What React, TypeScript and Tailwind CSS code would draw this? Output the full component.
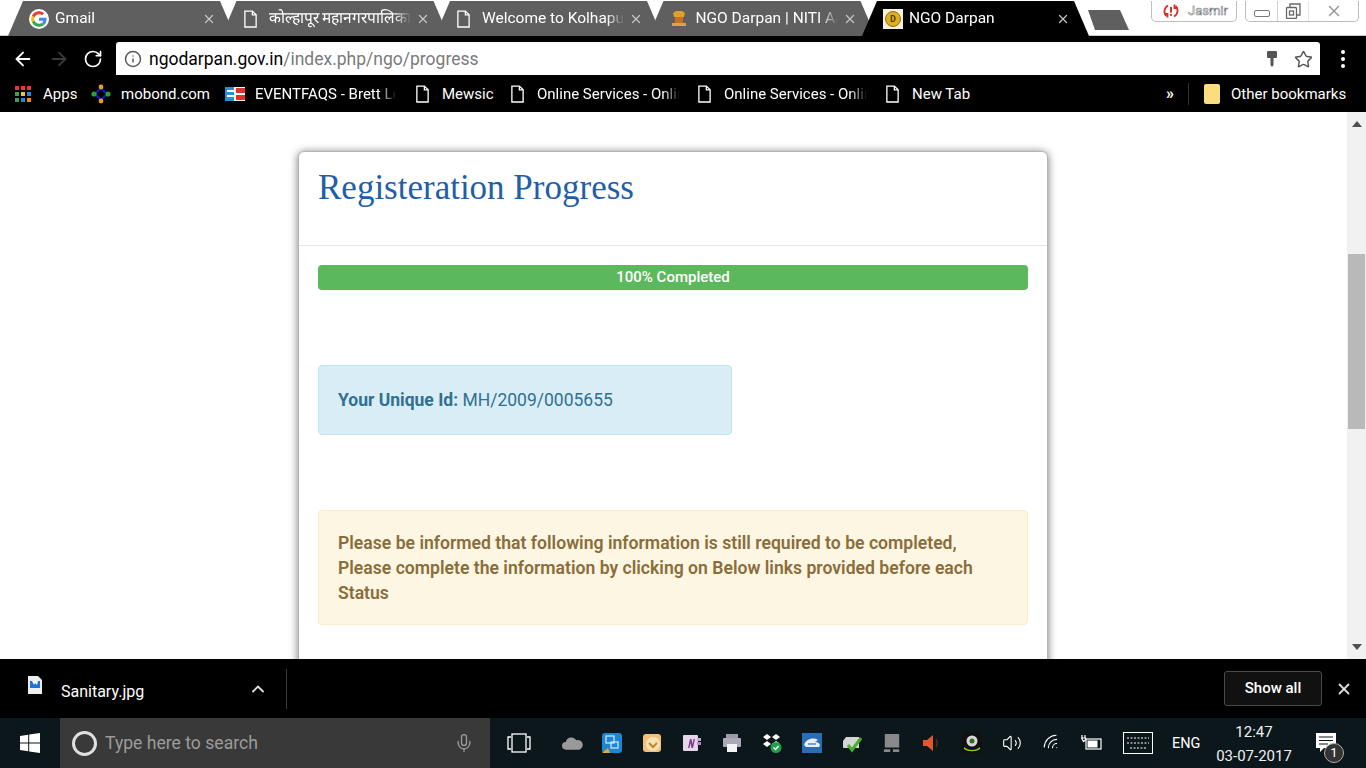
import React from 'react';
import { ArrowLeft, ArrowRight, RotateCw, Info, Star, X, ChevronUp, Mic, Volume2, Wifi } from 'lucide-react';

const FileIcon = ({ className = '' }: { className?: string }) => (
  <svg viewBox="0 0 16 20" className={className} fill="none" stroke="currentColor" strokeWidth="1.4">
    <path d="M2 1.5h8l4 4v13H2z" />
    <path d="M10 1.5v4h4" />
  </svg>
);

const GoogleIcon = () => (
  <svg viewBox="0 0 48 48" className="w-5 h-5 bg-white rounded-full p-[2px]">
    <path fill="#EA4335" d="M24 9.5c3.5 0 6.7 1.3 9.1 3.5l6.8-6.8C35.8 2.4 30.2 0 24 0 14.6 0 6.5 5.4 2.6 13.2l7.9 6.2C12.4 13.7 17.7 9.5 24 9.5z" />
    <path fill="#4285F4" d="M46.98 24.55c0-1.57-.15-3.09-.38-4.55H24v9.02h12.94c-.58 2.96-2.26 5.48-4.78 7.18l7.73 6c4.51-4.18 7.09-10.36 7.09-17.65z" />
    <path fill="#FBBC05" d="M10.53 28.59c-.48-1.45-.76-2.99-.76-4.59s.27-3.14.76-4.59l-7.98-6.19C.92 16.46 0 20.12 0 24c0 3.88.92 7.54 2.56 10.78l7.97-6.19z" />
    <path fill="#34A853" d="M24 48c6.48 0 11.93-2.13 15.89-5.81l-7.73-6c-2.15 1.45-4.92 2.3-8.16 2.3-6.26 0-11.57-4.22-13.47-9.91l-7.98 6.19C6.51 42.62 14.62 48 24 48z" />
  </svg>
);

const EmblemIcon = () => (
  <svg viewBox="0 0 18 18" className="w-[18px] h-[18px]">
    <path fill="#e0a030" d="M3 3l3-2h6l3 2-1 4H4z" />
    <rect x="5" y="7" width="8" height="6" fill="#c96f1e" />
    <rect x="2" y="13" width="14" height="3" fill="#e3a03c" />
  </svg>
);

const DarpanIcon = () => (
  <div className="w-5 h-5 bg-[#f7f0dc] flex items-center justify-center">
    <div className="w-4 h-4 rounded-full bg-[#e0b01c] border border-[#8f6d10] flex items-center justify-center text-[9px] leading-none font-bold text-[#4c3a05]">D</div>
  </div>
);

type TabProps = { title: string; icon: React.ReactNode; active?: boolean; first?: boolean };

const Tab = ({ title, icon, active, first }: TabProps) => (
  <div
    className={`relative flex items-center pt-[1px] h-[35px] w-[227px] shrink-0 [clip-path:polygon(0_100%,15px_0,212px_0,100%_100%)] ${
      first ? 'ml-2' : 'ml-[-13.5px]'
    } ${active ? 'bg-black z-10' : 'bg-[#5f5f5f]'}`}
  >
    <div className="w-[47px] pl-[21px] shrink-0 flex items-center">{icon}</div>
    <div className="w-[142px] shrink-0 overflow-hidden whitespace-nowrap text-white text-[15.5px] [mask-image:linear-gradient(to_right,black_88%,transparent)]">
      {title}
    </div>
    <X className="ml-[5px] w-[14px] h-[14px] text-[#c4c4c4]" strokeWidth={2.2} />
  </div>
);

const AppsIcon = () => (
  <svg viewBox="0 0 16 16" className="w-4 h-4">
    {[
      '#e53935', '#e53935', '#e53935',
      '#43a047', '#fbc02d', '#1e88e5',
      '#43a047', '#1e88e5', '#fb8c00',
    ].map((c, i) => (
      <rect key={i} x={(i % 3) * 6} y={Math.floor(i / 3) * 6} width="4" height="4" fill={c} />
    ))}
  </svg>
);

const MobondIcon = () => (
  <svg viewBox="0 0 20 20" className="w-5 h-5">
    <path d="M10 4L16 10L10 16L4 10Z" fill="none" stroke="#1414e0" strokeWidth="2" />
    <circle cx="10" cy="3" r="2.4" fill="#f09a1a" />
    <circle cx="10" cy="17" r="2.4" fill="#f09a1a" />
    <circle cx="3" cy="10" r="2.6" fill="#2f9e2f" />
    <circle cx="17" cy="10" r="2.6" fill="#2f9e2f" />
  </svg>
);

const EventIcon = () => (
  <svg viewBox="0 0 20 14" className="w-5 h-[14px]">
    <rect width="20" height="14" fill="#fff" />
    <rect x="0" y="0" width="9" height="14" fill="#2b8fd8" />
    <rect x="2" y="3" width="7" height="2" fill="#fff" />
    <rect x="2" y="8" width="7" height="2" fill="#fff" />
    <rect x="11" y="1" width="9" height="5" fill="#e03131" />
    <rect x="11" y="8" width="9" height="5" fill="#e03131" />
  </svg>
);

const Bookmark = ({ icon, label, className, fade }: { icon: React.ReactNode; label: string; className: string; fade?: boolean }) => (
  <div className={`flex items-center shrink-0 ${className}`}>
    {icon}
    <span
      className={`whitespace-nowrap overflow-hidden ${
        fade ? 'flex-1 [mask-image:linear-gradient(to_right,black_88%,transparent)]' : ''
      }`}
    >
      {label}
    </span>
  </div>
);

const StartIcon = () => (
  <svg viewBox="0 0 20 20" className="w-5 h-5" fill="#fff">
    <path d="M0 3l8.2-1.2v7.7H0zM9.2 1.6L20 0v9.5H9.2zM0 10.5h8.2v7.7L0 17zM9.2 10.5H20V20L9.2 18.4z" />
  </svg>
);

const OneNoteIcon = () => (
  <svg viewBox="0 0 20 20" className="w-5 h-5">
    <rect x="1" y="2" width="15" height="16" rx="1" fill="#e6d6ea" />
    <rect x="15" y="5" width="4" height="3" fill="#c9a9d2" />
    <rect x="15" y="9" width="4" height="3" fill="#b78cc4" />
    <path d="M6 15l2-9h1.500l1 5 1-5H13l-2 9H9.500l-1-5-1 5z" fill="#7b3f8f" />
  </svg>
);

const trayIcons: React.ReactNode[] = [
  <svg key="cloud" viewBox="0 0 22 16" className="w-[21px] h-4" fill="#9a9a9a">
    <path d="M4 15a4 4 0 0 1 0-8 6 6 0 0 1 11-2 5 5 0 0 1 3 10z" />
  </svg>,
  <svg key="blue" viewBox="0 0 20 20" className="w-5 h-5">
    <rect width="20" height="20" rx="3" fill="#1c86d1" />
    <rect x="4" y="3" width="8" height="7" fill="none" stroke="#d5ecfb" strokeWidth="1.2" />
    <rect x="9" y="9" width="7" height="6" fill="none" stroke="#d5ecfb" strokeWidth="1.2" />
    <path d="M0 20L6 15 8 20z" fill="#e5a63a" />
  </svg>,
  <svg key="orange" viewBox="0 0 20 20" className="w-5 h-5">
    <rect x="1" y="1" width="18" height="18" rx="3" fill="#f1c07a" />
    <circle cx="11" cy="11" r="7" fill="#f6e1b8" />
    <path d="M7 10l4 4 4-4" fill="none" stroke="#c9851f" strokeWidth="2" />
  </svg>,
  <OneNoteIcon key="note" />,
  <svg key="printer" viewBox="0 0 20 20" className="w-5 h-5">
    <rect x="4" y="1" width="12" height="5" fill="#9a9aa8" />
    <rect x="1" y="5" width="18" height="9" rx="1" fill="#a9a9b8" />
    <rect x="5" y="11" width="10" height="8" fill="#f4f4f4" />
  </svg>,
  <svg key="dropbox" viewBox="0 0 20 20" className="w-5 h-5">
    <path d="M5 1l4 3-4 3-4-3zM14 1l4 3-4 3-4-3zM5 8l4 3-4 3-4-3zM14 8l3 2-5 4-2-3z" fill="#fff" />
    <circle cx="14" cy="14.500" r="5.500" fill="#1fa04a" />
    <path d="M11.500 14.500l2 2 3-3.500" fill="none" stroke="#fff" strokeWidth="1.500" />
  </svg>,
  <svg key="bluebox" viewBox="0 0 20 20" className="w-5 h-5">
    <rect width="20" height="20" fill="#2a6db5" />
    <path d="M2 12c2-6 9-8 14-5l-3 2c3 0 4 1 5 3l-1 2H4z" fill="#e8f1fa" />
    <path d="M6 11h8" stroke="#2a6db5" strokeWidth="1.200" />
  </svg>,
  <svg key="check" viewBox="0 0 20 20" className="w-5 h-5">
    <path d="M1 8l3-4h13v11H2a1 1 0 0 1-1-1z" fill="#d5d5d5" />
    <path d="M6 12l4 5 9-12" fill="none" stroke="#43b02a" strokeWidth="3" />
  </svg>,
  <svg key="net" viewBox="0 0 20 22" className="w-[18px] h-5">
    <rect x="2" y="1" width="16" height="15" fill="#8a8a8a" />
    <rect x="1" y="18" width="7" height="3" fill="#8a8a8a" />
    <rect x="11" y="18" width="7" height="3" fill="#8a8a8a" />
  </svg>,
  <svg key="speaker" viewBox="0 0 20 20" className="w-5 h-5">
    <path d="M1 7h4l6-5v16l-6-5H1z" fill="#e0572b" />
    <path d="M14 6c1.500 2.500 1.500 5.500 0 8" fill="none" stroke="#6b2a16" strokeWidth="1.300" />
  </svg>,
  <svg key="cam" viewBox="0 0 20 20" className="w-5 h-5">
    <rect width="20" height="20" rx="3" fill="#111" />
    <circle cx="10" cy="8" r="5.500" fill="#d8d8d8" />
    <circle cx="10" cy="8" r="2.500" fill="#2c6e1e" />
    <path d="M2 14c4 4 12 4 16 0v2c-4 3-12 3-16 0z" fill="#8fd11f" />
  </svg>,
  <Volume2 key="vol" className="w-5 h-5 text-white" strokeWidth={1.3} />,
  <Wifi key="wifi" className="w-5 h-5 text-white -rotate-45" strokeWidth={1.3} />,
  <svg key="battery" viewBox="0 0 22 16" className="w-[22px] h-4" fill="none" stroke="#fff">
    <rect x="5" y="4" width="15" height="10" strokeWidth="1.200" />
    <rect x="6.500" y="5.500" width="10" height="7" fill="#fff" stroke="none" />
    <path d="M1 0v3M4 0v3M0.500 3h4v2l-2 1.500z" strokeWidth="1.200" />
  </svg>,
];

const App = () => {
  return (
    <div className="h-[768px] w-[1366px] overflow-hidden flex flex-col bg-white font-['Roboto',sans-serif]">
      {/* tab strip */}
      <div className="h-9 shrink-0 flex items-start bg-white border-b border-[#c8c8c8] pt-[1px]">
        <Tab first title="Gmail" icon={<GoogleIcon />} />
        <Tab title="कोल्हापूर महानगरपालिका" icon={<FileIcon className="w-[15px] h-5 text-white" />} />
        <Tab title="Welcome to Kolhapur" icon={<FileIcon className="w-[15px] h-5 text-white" />} />
        <Tab title="NGO Darpan | NITI Aayog" icon={<EmblemIcon />} />
        <Tab active title="NGO Darpan" icon={<DarpanIcon />} />
        <div className="ml-[-1px] mt-[9px] w-[41px] h-[20px] bg-[#5f5f5f] [clip-path:polygon(0_0,32px_0,100%_100%,7px_100%)]" />
        <div className="ml-[22px] w-[86px] h-[21px] border border-t-0 border-[#bdbdbd] rounded-b-[5px] flex items-center pl-[11px] text-[13px] text-white [-webkit-text-stroke:0.5px_#666]">
          <svg viewBox="0 0 16 16" className="w-4 h-4" fill="none" stroke="#d93025" strokeWidth="1.800">
            <path d="M5 2.500A6.500 6.500 0 0 0 3.500 13" />
            <path d="M1 11h3.500v3.500" />
            <path d="M11 13.500A6.500 6.500 0 0 0 12.500 3" />
            <path d="M15 5h-3.500V1.500" />
            <path d="M8 4v5.500M8 11v1.800" strokeWidth="2" />
          </svg>
          <span className="ml-[9px]">Jasmir</span>
        </div>
        <div className="ml-2 w-[114px] h-[21px] border border-t-0 border-[#bdbdbd] rounded-b-[5px] flex items-center text-[#666]">
          <div className="w-[32px] h-full flex items-center justify-center border-r border-[#d0d0d0]">
            <div className="w-4 h-[7px] mt-[5px] border border-[#777] rounded-[2px]" />
          </div>
          <div className="w-[31px] h-full flex items-center justify-center border-r border-[#e4e4e4]">
            <svg viewBox="0 0 16 16" className="w-4 h-4" fill="none" stroke="currentColor" strokeWidth="1.300">
              <rect x="1.500" y="4.500" width="10" height="11" rx="1" />
              <path d="M5 4.500V1h10v11h-3.500" />
              <rect x="4.500" y="8" width="4" height="4" />
            </svg>
          </div>
          <div className="flex-1 flex items-center justify-center">
            <X className="w-[18px] h-[18px] text-[#999]" strokeWidth={2} />
          </div>
        </div>
      </div>

      {/* toolbar */}
      <div className="h-[39px] shrink-0 bg-black flex items-end">
        <div className="w-[116px] h-[33px] shrink-0 flex items-center pl-[12px] text-white">
          <ArrowLeft className="w-[22px] h-[22px]" strokeWidth={2} />
          <ArrowRight className="ml-[14px] w-[22px] h-[22px] text-[#3a3a3a]" strokeWidth={2} />
          <RotateCw className="ml-[13px] w-[20px] h-[20px]" strokeWidth={2} />
        </div>
        <div className="w-[1204px] h-[33px] bg-white rounded-t-[3px] flex items-center pl-[8px] pr-[7px] pt-[1px]">
          <Info className="w-[18px] h-[18px] text-[#5a5a5a]" strokeWidth={2} />
          <div className="ml-[7px] flex-1 text-[17.5px] text-[#7a7a7a] whitespace-nowrap">
            <span className="text-black">ngodarpan.gov.in</span>/index.php/ngo/progress
          </div>
          <svg viewBox="0 0 10 18" className="w-[10px] h-[18px] mr-[17px]" fill="#555">
            <rect x="0" y="1" width="10" height="7" rx="1" />
            <path d="M3.500 8h3v7l-1.500 2-1.500-2z" />
          </svg>
          <Star className="w-[19px] h-[19px] text-[#555]" strokeWidth={1.8} />
        </div>
        <div className="flex-1 h-[33px] flex flex-col items-center justify-center gap-[3px]">
          <div className="w-[4px] h-[4px] rounded-full bg-white" />
          <div className="w-[4px] h-[4px] rounded-full bg-white" />
          <div className="w-[4px] h-[4px] rounded-full bg-white" />
        </div>
      </div>

      {/* bookmarks */}
      <div className="h-[37px] shrink-0 bg-black flex items-center text-white text-[15px] pl-[15px] pt-[1px]">
        <Bookmark className="w-[76px] gap-3" icon={<AppsIcon />} label="Apps" />
        <Bookmark className="w-[134px] gap-[10px]" icon={<MobondIcon />} label="mobond.com" />
        <Bookmark className="w-[190px] gap-[10px] pr-[19px]" fade icon={<EventIcon />} label="EVENTFAQS - Brett Lee" />
        <Bookmark className="w-[95px] gap-3" icon={<FileIcon className="w-[15px] h-5 shrink-0" />} label="Mewsic" />
        <Bookmark className="w-[187px] gap-3 pr-[17px]" fade icon={<FileIcon className="w-[15px] h-5 shrink-0" />} label="Online Services - Online" />
        <Bookmark className="w-[188px] gap-3 pr-[18px]" fade icon={<FileIcon className="w-[15px] h-5 shrink-0" />} label="Online Services - Online" />
        <Bookmark className="w-[90px] gap-3" icon={<FileIcon className="w-[15px] h-5 shrink-0" />} label="New Tab" />
        <span className="ml-[191px] w-[18px] text-[16px] font-bold">»</span>
        <div className="w-px h-[22px] bg-[#333] ml-[4px]" />
        <Bookmark
          className="ml-[15px] gap-[11px]"
          icon={<div className="w-4 h-5 bg-[#fbdc7e] rounded-[2px]" />}
          label="Other bookmarks"
        />
      </div>

      {/* page */}
      <div className="flex-1 min-h-0 flex overflow-hidden">
        <div className="flex-1 min-w-0 pt-[39px]">
          <div className="ml-[298px] w-[750px] h-[700px] bg-white border border-[#b5b5b5] rounded-md shadow-[0_1px_9px_rgba(0,0,0,0.55)]">
            <div className="h-[94px] px-[19px] pt-[14px] border-b border-[#e5e5e5]">
              <h1 className="font-['Liberation_Serif',serif] text-[35px] leading-[44px] text-[#1f5ea8]">Registeration Progress</h1>
            </div>
            <div className="px-[19px] pt-[19px]">
              <div className="h-[25px] bg-[#5cb85c] rounded-[4px] text-white text-[15px] font-medium flex items-center justify-center">
                100% Completed
              </div>
              <div className="mt-[75px] w-[414px] h-[70px] px-[19px] flex items-center bg-[#d9edf7] border border-[#bce8f1] rounded-[4px] text-[#31708f] text-[17.5px]">
                <p>
                  <b className="font-bold">Your Unique Id:</b> MH/2009/0005655
                </p>
              </div>
              <div className="mt-[75px] h-[115px] px-[19px] pt-[20px] bg-[#fcf6e3] border border-[#faebcc] rounded-[4px] text-[#8a6d3b] text-[17.6px] leading-[25px] font-semibold">
                Please be informed that following information is still required to be completed,
                <br />
                Please complete the information by clicking on Below links provided before each Status
              </div>
            </div>
          </div>
        </div>
        <div className="w-[19px] shrink-0 bg-[#f1f1f1] flex flex-col items-center">
          <div className="h-[24px] flex items-center justify-center">
            <div className="w-0 h-0 border-x-[5px] border-x-transparent border-b-[6px] border-b-[#505050]" />
          </div>
          <div className="mt-[118px] w-[17px] h-[175px] bg-[#b9b9b9]" />
          <div className="flex-1" />
          <div className="h-[24px] flex items-center justify-center">
            <div className="w-0 h-0 border-x-[5px] border-x-transparent border-t-[6px] border-t-[#505050]" />
          </div>
        </div>
      </div>

      {/* downloads */}
      <div className="h-[59px] shrink-0 bg-black flex items-center text-white">
        <div className="w-[287px] h-10 flex items-center border-r border-[#3c3c3c] shrink-0">
          <svg viewBox="0 0 14 18" className="ml-[28px] w-[14px] h-[18px] -mt-[8px]">
            <path d="M0 0h10l4 4v14H0z" fill="#eee" />
            <rect x="2" y="5" width="10" height="7" fill="#1e73d8" />
            <path d="M4 5h6l-1 4-2-2-1 2z" fill="#fff" />
          </svg>
          <span className="ml-[19px] text-[16px] mt-[7px]">Sanitary.jpg</span>
          <ChevronUp className="ml-[104px] w-5 h-5 text-[#dddddd]" strokeWidth={2.2} />
        </div>
        <div className="flex-1" />
        <div className="w-[98px] h-[35px] bg-[#111] border border-[#4a4a4a] rounded-[3px] flex items-center justify-center text-[15px] font-medium">
          Show all
        </div>
        <X className="ml-[13px] mr-[13px] w-[18px] h-[18px] text-[#dddddd]" strokeWidth={2.4} />
      </div>

      {/* taskbar */}
      <div className="h-[50px] shrink-0 bg-[#0c171b] flex items-center text-white">
        <div className="w-[60px] flex justify-center">
          <StartIcon />
        </div>
        <div className="w-[430px] h-full bg-[#393939] flex items-center pl-[12px] pr-[16px]">
          <div className="w-[25px] h-[25px] rounded-full border-[3px] border-[#e0e0e0]" />
          <span className="ml-[8px] flex-1 text-[17.6px] text-[#9c9c9c]">Type here to search</span>
          <Mic className="w-[20px] h-[22px] text-[#9c9c9c]" strokeWidth={1.6} />
        </div>
        <div className="w-[58px] mr-[4px] flex justify-center">
          <svg viewBox="0 0 24 20" className="w-6 h-5" fill="none" stroke="#fff" strokeWidth="1.3">
            <rect x="5" y="1" width="14" height="18" />
            <path d="M4 4H1v12h3M20 4h3v12h-3" />
          </svg>
        </div>
        <div className="flex items-center">
          {trayIcons.map((icon, i) => (
            <div key={i} className="w-10 flex justify-center items-center">
              {icon}
            </div>
          ))}
        </div>
        <svg viewBox="0 0 30 22" className="ml-[11px] w-[30px] h-[22px]" fill="none" stroke="#fff">
          <rect x="0.500" y="0.500" width="29" height="21" />
          <path d="M4 6h22M4 11h22M7 16h16" strokeDasharray="2 1.500" />
        </svg>
        <span className="ml-[19px] mt-[1px] text-[14.5px] w-[30px]">ENG</span>
        <div className="ml-[2px] w-[100px] pt-[2px] flex flex-col items-center text-[15px] leading-[20px] text-[#f0f0f0]">
          <span>12:47</span>
          <span className="mt-[4px]">03-07-2017</span>
        </div>
        <div className="relative ml-[12px] w-[22px] h-[24px]">
          <svg viewBox="0 0 20 20" className="w-5 h-5 mt-[2px]" fill="#fff">
            <path d="M0 0h20v15H8l-4 4v-4H0z" />
            <path d="M3 4h14M3 7.500h14M3 11h9" stroke="#0c171b" strokeWidth="1.200" />
          </svg>
          <div className="absolute left-[8px] top-[12px] w-5 h-5 rounded-full bg-[#333] border border-[#aaa] flex items-center justify-center text-[13px]">1</div>
        </div>
      </div>
    </div>
  );
};

export default App;
